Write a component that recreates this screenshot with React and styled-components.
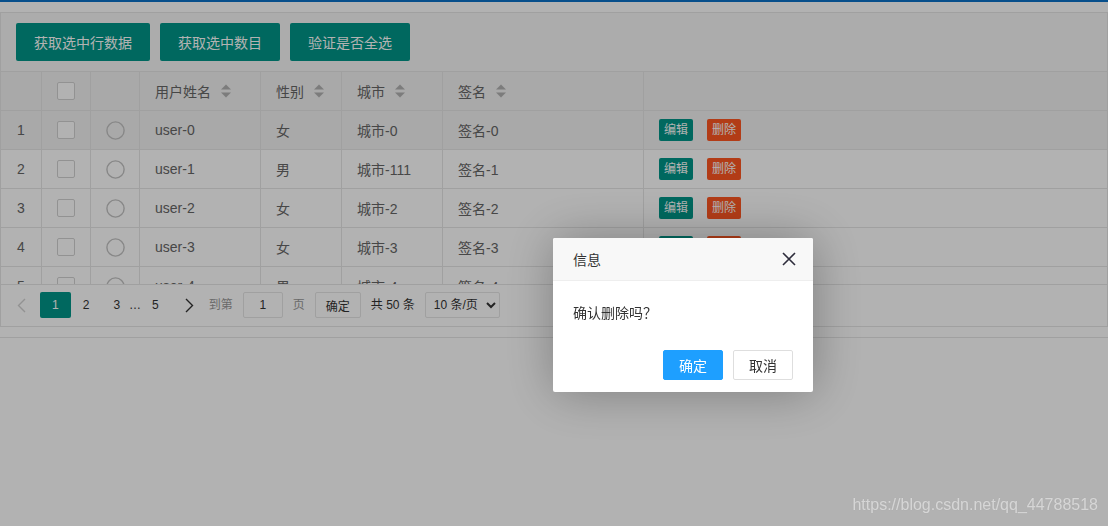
import styled, { createGlobalStyle } from "styled-components";

const GlobalStyle = createGlobalStyle`
  html, body { margin: 0; padding: 0; background: #fff; }
  body {
    font-family: "Liberation Sans", "Noto Sans CJK SC", sans-serif;
    font-size: 14px;
    color: #333;
  }
  * { box-sizing: border-box; }
`;

const COLS = "41px 49px 49px 121px 81px 101px 201px 1fr";

// Полоса сверху
const TopBar = styled.div`
  height: 2px;
  background: #0b72c8;
`;

const Page = styled.div`
  padding: 10px 0;
  border-bottom: 1px solid #e6e6e6;
`;

const View = styled.div`
  border: 1px solid #e6e6e6;
  background: #fff;
`;

const Toolbar = styled.div`
  display: flex;
  gap: 10px;
  padding: 10px 15px;
  background: #f6f6f6;
  border-bottom: 1px solid #e6e6e6;
`;

const Btn = styled.button`
  height: 38px;
  padding: 0 18px;
  border: none;
  border-radius: 2px;
  background: #009688;
  color: #fff;
  font-family: inherit;
  font-size: 14px;
  cursor: pointer;
`;

const Row = styled.div`
  display: grid;
  grid-template-columns: ${COLS};
  height: 39px;
  border-bottom: 1px solid #e6e6e6;
  background: ${(p) => p.$bg || "#fff"};
`;

const Cell = styled.div`
  display: flex;
  align-items: center;
  justify-content: ${(p) => (p.$center ? "center" : "flex-start")};
  padding: ${(p) => (p.$center ? "0" : "0 15px")};
  border-right: 1px solid #e6e6e6;
  color: #666;
  font-size: 14px;
  white-space: nowrap;
  overflow: hidden;
  &:last-child { border-right: none; }
`;

const Body = styled.div`
  height: 173px;
  overflow: hidden;
`;

const Check = styled.span`
  display: inline-block;
  width: 18px;
  height: 18px;
  border: 1px solid #d2d2d2;
  border-radius: 2px;
  background: #fff;
`;

const Sort = styled.svg`
  margin-left: 10px;
  flex: none;
`;

const Actions = styled.div`
  display: flex;
  gap: 14px;
`;

const XsBtn = styled.button`
  height: 22px;
  padding: 0 5px;
  border: none;
  border-radius: 2px;
  background: ${(p) => (p.$danger ? "#ff5722" : "#009688")};
  color: #fff;
  font-family: inherit;
  font-size: 12px;
  line-height: 22px;
`;

// Пагинация
const Pager = styled.div`
  display: flex;
  align-items: flex-start;
  height: 42px;
  padding: 7px 7px 0 8px;
  border-top: 1px solid #e6e6e6;
  font-size: 12px;
  color: #333;
`;

const PageLink = styled.span`
  display: inline-flex;
  align-items: center;
  height: 26px;
  padding: ${(p) => p.$pad || "0 12px"};
  border-radius: 2px;
  background: ${(p) => (p.$cur ? "#009688" : "transparent")};
  color: ${(p) => (p.$cur ? "#fff" : p.$muted ? "#d2d2d2" : "#333")};
`;

const Ellipsis = styled.span`
  width: 11px;
  height: 26px;
  line-height: 26px;
  margin-left: -3px;
  overflow: visible;
  white-space: nowrap;
  color: #333;
`;

const Muted = styled.span`
  height: 26px;
  line-height: 26px;
  color: ${(p) => (p.$dark ? "#333" : "#999")};
  margin-left: ${(p) => p.$ml || 0}px;
`;

const SkipInput = styled.div`
  width: 40px;
  height: 26px;
  margin: 0 10px;
  border: 1px solid #e6e6e6;
  border-radius: 2px;
  line-height: 24px;
  text-align: center;
  color: #333;
`;

const SkipBtn = styled.button`
  height: 26px;
  margin-left: 10px;
  padding: 0 10px;
  border: 1px solid #e6e6e6;
  border-radius: 2px;
  background: #fff;
  color: #333;
  font-family: inherit;
  font-size: 12px;
`;

const Limit = styled.select`
  width: 75px;
  height: 26px;
  margin-left: 10px;
  padding: 0 0 0 4px;
  border: 1px solid #e6e6e6;
  border-radius: 2px;
  background: #fff;
  color: #333;
  font-family: inherit;
  font-size: 12px;
`;

// Слой поверх страницы
const Shade = styled.div`
  position: fixed;
  inset: 0;
  background: rgba(0, 0, 0, 0.3);
`;

const Dialog = styled.div`
  position: absolute;
  left: 553px;
  top: 238px;
  width: 260px;
  background: #fff;
  border-radius: 2px;
  box-shadow: 1px 1px 50px rgba(0, 0, 0, 0.3);
`;

const DialogTitle = styled.div`
  display: flex;
  align-items: center;
  justify-content: space-between;
  height: 43px;
  padding: 0 17px 0 20px;
  background: #f8f8f8;
  border-bottom: 1px solid #eee;
  border-radius: 2px 2px 0 0;
  font-size: 14px;
  color: #333;
`;

const DialogContent = styled.div`
  padding: 20px;
  line-height: 24px;
  font-size: 14px;
  color: #333;
`;

const DialogBtns = styled.div`
  display: flex;
  justify-content: flex-end;
  gap: 10px;
  padding: 0 20px 12px;
  margin-top: 5px;
`;

const LayerBtn = styled.button`
  height: 30px;
  padding: 0 15px;
  border: 1px solid ${(p) => (p.$primary ? "#1e9fff" : "#dedede")};
  border-radius: 2px;
  background: ${(p) => (p.$primary ? "#1e9fff" : "#fff")};
  color: ${(p) => (p.$primary ? "#fff" : "#333")};
  font-family: inherit;
  font-size: 14px;
`;

const Watermark = styled.div`
  position: absolute;
  right: 10px;
  bottom: 12px;
  font-family: "Liberation Sans", sans-serif;
  font-size: 16px;
  color: rgba(255, 255, 255, 0.55);
  text-shadow: 0 0 1px rgba(0, 0, 0, 0.1);
`;

const SortIcon = () => (
  <Sort width="10" height="14" viewBox="0 0 10 14">
    <path d="M0 5.5 L5 0.5 L10 5.5 Z" fill="#b2b2b2" />
    <path d="M0 8.5 L10 8.5 L5 13.5 Z" fill="#b2b2b2" />
  </Sort>
);

const Radio = () => (
  <svg width="19" height="19" viewBox="0 0 19 19">
    <circle cx="9.5" cy="9.5" r="8.6" fill="none" stroke="#c2c2c2" strokeWidth="1.4" />
  </svg>
);

const Chevron = ({ dir, color }) => (
  <svg width="9" height="15" viewBox="0 0 9 15">
    <path
      d={dir === "left" ? "M8 1 L1.5 7.5 L8 14" : "M1 1 L7.5 7.5 L1 14"}
      fill="none"
      stroke={color}
      strokeWidth="1.4"
    />
  </svg>
);

const rows = [
  { name: "user-0", sex: "女", city: "城市-0", sign: "签名-0" },
  { name: "user-1", sex: "男", city: "城市-111", sign: "签名-1" },
  { name: "user-2", sex: "女", city: "城市-2", sign: "签名-2" },
  { name: "user-3", sex: "女", city: "城市-3", sign: "签名-3" },
  { name: "user-4", sex: "男", city: "城市-4", sign: "签名-4" },
];

const heads = ["用户姓名", "性别", "城市", "签名"];

export default function App() {
  return (
    <>
      <GlobalStyle />
      <TopBar />
      <Page>
        <View>
          <Toolbar>
            <Btn>获取选中行数据</Btn>
            <Btn>获取选中数目</Btn>
            <Btn>验证是否全选</Btn>
          </Toolbar>

          <Row $bg="#f2f2f2">
            <Cell $center />
            <Cell $center>
              <Check />
            </Cell>
            <Cell $center />
            {heads.map((h) => (
              <Cell key={h}>
                {h}
                <SortIcon />
              </Cell>
            ))}
            <Cell />
          </Row>

          <Body>
            {rows.map((r, i) => (
              <Row key={r.name} $bg={i === 0 ? "#f2f2f2" : "#fff"}>
                <Cell $center>{i + 1}</Cell>
                <Cell $center>
                  <Check />
                </Cell>
                <Cell $center>
                  <Radio />
                </Cell>
                <Cell>{r.name}</Cell>
                <Cell>{r.sex}</Cell>
                <Cell>{r.city}</Cell>
                <Cell>{r.sign}</Cell>
                <Cell>
                  <Actions>
                    <XsBtn>编辑</XsBtn>
                    <XsBtn $danger>删除</XsBtn>
                  </Actions>
                </Cell>
              </Row>
            ))}
          </Body>

          <Pager>
            <PageLink $pad="0 14px 0 8px" $muted>
              <Chevron dir="left" color="#d2d2d2" />
            </PageLink>
            <PageLink $cur>1</PageLink>
            <PageLink>2</PageLink>
            <PageLink>3</PageLink>
            <Ellipsis>…</Ellipsis>
            <PageLink>5</PageLink>
            <PageLink $pad="0 12px 0 14px">
              <Chevron dir="right" color="#333" />
            </PageLink>
            <Muted $ml={3}>到第</Muted>
            <SkipInput>1</SkipInput>
            <Muted>页</Muted>
            <SkipBtn>确定</SkipBtn>
            <Muted $dark $ml={10}>共 50 条</Muted>
            <Limit defaultValue="10">
              <option value="10">10 条/页</option>
            </Limit>
          </Pager>
        </View>
      </Page>

      <Shade>
        <Dialog>
          <DialogTitle>
            信息
            <svg width="14" height="14" viewBox="0 0 14 14">
              <path d="M1 1 L13 13 M13 1 L1 13" stroke="#2e2d3c" strokeWidth="1.6" />
            </svg>
          </DialogTitle>
          <DialogContent>确认删除吗？</DialogContent>
          <DialogBtns>
            <LayerBtn $primary>确定</LayerBtn>
            <LayerBtn>取消</LayerBtn>
          </DialogBtns>
        </Dialog>
        <Watermark>https://blog.csdn.net/qq_44788518</Watermark>
      </Shade>
    </>
  );
}
